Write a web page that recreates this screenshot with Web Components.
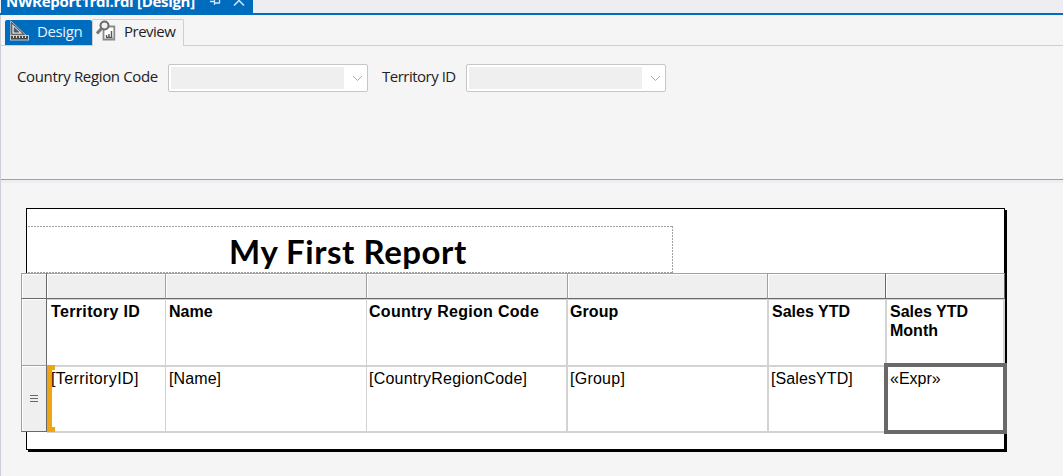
<!DOCTYPE html>
<html lang="en">
<head>
<meta charset="utf-8">
<title>Report Designer</title>
<style>
html,body{margin:0;height:100%;overflow:hidden}
</style>
</head>
<body>
<report-designer></report-designer>
<script>
const define = (name, html, setup) => {
  const t = document.createElement('template');
  t.innerHTML = html;
  customElements.define(name, class extends HTMLElement {
    constructor() {
      super();
      this.attachShadow({mode: 'open'}).append(t.content.cloneNode(true));
    }
    connectedCallback() { if (setup) setup(this, this.shadowRoot); }
  });
};

define('document-tab', `
<style>
:host{display:flex;height:13px;background:#eeeef2;border-bottom:2px solid #006cbe;padding-left:1px;overflow:hidden}
.tab{width:252px;height:13px;background:#006cbe;color:#fff;display:flex;align-items:flex-start}
.name{font:700 15px/20px "Open Sans",sans-serif;margin:-9px 0 0 5px;width:204px;white-space:nowrap;letter-spacing:-.3px}
svg{display:block}
</style>
<div class="tab"><span class="name"><slot></slot></span>
<svg width="40" height="13" viewBox="0 0 40 13" fill="none" stroke="#cfe4f5"><path d="M0 1.500H4M4.500 0V5M5 3H10M9.500 0V3" stroke-width="1.300"/><path d="M24 5.500L29 .5L34 5.500" stroke-width="1.600"/></svg></div>`);

define('view-tab', `
<style>
:host{display:flex;box-sizing:border-box;height:27px;width:92px;border:1px solid #ccceda;border-bottom:0;border-radius:2px 2px 0 0;background:#f5f5f5;color:#1e1e1e;padding:0 0 0 3px;font:15px/22px "Open Sans",sans-serif;letter-spacing:-.5px}
:host([active]){width:87px;height:25px;margin-top:1px;background:#006cbe;color:#e8f3fc;border:0;padding-left:4px;letter-spacing:-.4px}
.text{margin-left:8px;white-space:nowrap}
:host([active]) .text{margin-left:7px}
</style><slot name="icon"></slot><span class="text"><slot></slot></span>`);

define('ruler-icon', `
<style>:host{display:block;width:21px;height:22px}svg{display:block}</style>
<svg width="21" height="22" viewBox="0 0 21 22"><path d="M1.700 .8L17 15.300H1.700Z" fill="#555" stroke="#c9c9c9" stroke-width=".8"/><path d="M3.300 4L13.500 13.800H3.300Z" fill="#d8d8d8"/><path d="M5.300 7.800V12H9.700Z" fill="#006cbe" stroke="#555"/><rect x="1.500" y="15.500" width="18" height="4.500" fill="#484848" stroke="#c9c9c9"/><path d="M4.500 16V18M7.500 16V18M10.500 16V18M13.500 16V18M16.500 16V18" stroke="#ddd"/></svg>`);

define('preview-icon', `
<style>:host{display:block;width:20px;height:22px}svg{display:block}</style>
<svg width="20" height="22" viewBox="0 0 20 22" fill="none"><path d="M8 6.500H18.300V19.500H7.500V6.500" fill="#fff" stroke="#8a8a8a" stroke-width="1.800"/><path d="M10.500 17.500V15M13 17.500V14M15.500 17.500V11M10 17.500H16.500" stroke="#555" stroke-width="1.400"/><circle cx="8.500" cy="5.500" r="4" fill="#f0f0f0" stroke="#686868" stroke-width="2"/><path d="M5.500 8.500L1 13.500" stroke="#777" stroke-width="3"/></svg>`);

define('view-tabs', `
<style>:host{display:flex;box-sizing:border-box;height:31px;padding:4px 0 0 4px;border-bottom:1px solid #ccceda}</style><slot></slot>`);

define('param-field', `
<style>
:host{display:flex;height:28px}
label{width:var(--label);font:15px/24px "Open Sans",sans-serif;color:#222;white-space:nowrap;letter-spacing:var(--ls,-.35px)}
.box{box-sizing:border-box;width:200px;height:28px;border:1px solid #c6c6c6;border-radius:2px;background:#fff;display:flex;align-items:center;padding-left:2px}
.value{width:173px;height:22px;background:#efefef}
svg{margin-left:8px}
</style>
<label><slot></slot></label><div class="box"><div class="value"></div><svg width="11" height="7" viewBox="0 0 11 7" fill="none" stroke="#aaa"><path d="M1 1L5.500 5.500L10 1"/></svg></div>`);

define('param-pane', `
<style>:host{display:flex;box-sizing:border-box;height:134px;padding:18px 0 0 16px;gap:14px;border-bottom:1px solid #a0a0a0}</style><slot></slot>`);

define('report-title', `
<style>
:host{display:block;box-sizing:border-box;width:645px;height:47px;margin:17px 0 0 1px;--d:repeating-linear-gradient(90deg,#a0a0a0 0 2px,transparent 2px 3px);
background:var(--d) 0 0/100% 1px no-repeat,var(--d) 0 100%/100% 1px no-repeat,repeating-linear-gradient(#a0a0a0 0 2px,transparent 2px 3px) 100% 0/1px 100% no-repeat;
font:700 33px/46px Lato,sans-serif;color:#000;padding:2px 0 0 201px;white-space:nowrap;letter-spacing:.55px}
</style><slot></slot>`);

define('col-handle', `
<style>:host{display:block;box-sizing:border-box;height:26px;background:#efefef;border-top:1px solid #a0a0a0;border-bottom:1px solid #696969;border-right:1px solid #a0a0a0;box-shadow:inset 1px 1px #fff}
:host([dark]){border-right-color:#696969}
:host([corner]){border-left:1px solid #a0a0a0}
:host([short]){margin-right:1px}
:host([early]){margin-left:-1px}</style>`);

define('row-handle', `
<style>:host{display:flex;box-sizing:border-box;margin-bottom:1px;background:#efefef;border-left:1px solid #a0a0a0;border-bottom:1px solid #a0a0a0;border-right:1px solid #696969;box-shadow:inset 1px 1px #fff;align-items:center;justify-content:center}
:host([detail]){border-bottom-color:#696969;margin-top:-1px}
svg{display:none}:host([detail]) svg{display:block}</style>
<svg width="8" height="8" viewBox="0 0 8 8" stroke="#696969"><path d="M0 .5H8M0 3.500H8M0 6.500H8"/></svg>`);

define('table-cell', `
<style>:host{display:block;position:relative;box-sizing:border-box;background:#fff;border-right:1px solid #d3d3d3;border-bottom:2px solid #d3d3d3;padding:2px 0 0 3px;font:16px/19px "Liberation Sans",Arial,sans-serif;color:#000;letter-spacing:var(--ls,0)}
:host([wide]){border-right-width:2px}
:host([head]){font-weight:700;border-top:1px solid #d3d3d3}
:host([first]){padding-left:4px}
:host([near]){padding-left:2px}
.mark{display:none;position:absolute;left:0;top:-2px;width:8px;height:66px}
:host([group]) .mark{display:block}
.sel{display:none;position:absolute;left:-3px;top:-4px;width:115px;height:63px;border:4px solid #696969}
:host([selected]) .sel{display:block}
span{position:relative}</style>
<div class="mark"><svg width="8" height="67" viewBox="0 0 8 67"><path d="M0 0H8V5H5V62H8V67H0Z" fill="#eea511"/></svg></div><span><slot></slot></span><div class="sel"></div>`);

define('report-table', `
<style>:host{display:grid;position:relative;margin-left:-6px;width:984px;grid-template-columns:26px 119px 201px 201px 201px 118px 118px;grid-template-rows:26px 68px 66px}</style><slot></slot>`);

define('report-page', `
<style>:host{display:block;box-sizing:border-box;margin:27px 0 0 25px;width:979px;height:242px;border:1px solid #000;background:#fff;box-shadow:2px 2px #000}</style><slot></slot>`);

define('report-designer', `
<style>
:host{display:block;box-sizing:border-box;width:1063px;height:476px;background:#f5f5f5;overflow:hidden}
.body{height:461px;border-left:1px solid #ccceda}
.edge{height:3px;background:#eeeef2}
report-page{margin-top:25px}
</style>
<document-tab>NWReport1rdl.rdl [Design]</document-tab>
<div class="body">
<view-tabs><view-tab active><ruler-icon slot="icon"></ruler-icon>Design</view-tab><view-tab><preview-icon slot="icon"></preview-icon>Preview</view-tab></view-tabs>
<param-pane><param-field style="--label:151px">Country Region Code</param-field><param-field style="--label:84px;--ls:-.5px">Territory ID</param-field></param-pane>
<div class="edge"></div>
<report-page>
<report-title>My First Report</report-title>
<report-table>
<col-handle dark corner></col-handle><col-handle></col-handle><col-handle></col-handle><col-handle></col-handle><col-handle short></col-handle><col-handle dark early short></col-handle><col-handle dark early></col-handle>
<row-handle></row-handle><table-cell head first style="--ls:.35px">Territory ID</table-cell><table-cell head>Name</table-cell><table-cell head near wide style="--ls:.3px">Country Region Code</table-cell><table-cell head near wide style="--ls:.1px">Group</table-cell><table-cell head wide>Sales YTD</table-cell><table-cell head wide>Sales YTD Month</table-cell>
<row-handle detail></row-handle><table-cell group first style="--ls:.4px">[TerritoryID]</table-cell><table-cell style="--ls:.1px">[Name]</table-cell><table-cell near wide style="--ls:.23px">[CountryRegionCode]</table-cell><table-cell near wide style="--ls:.25px">[Group]</table-cell><table-cell near wide style="--ls:.1px">[SalesYTD]</table-cell><table-cell selected wide>«Expr»</table-cell>
</report-table>
</report-page>
</div>`);
</script>
</body>
</html>
